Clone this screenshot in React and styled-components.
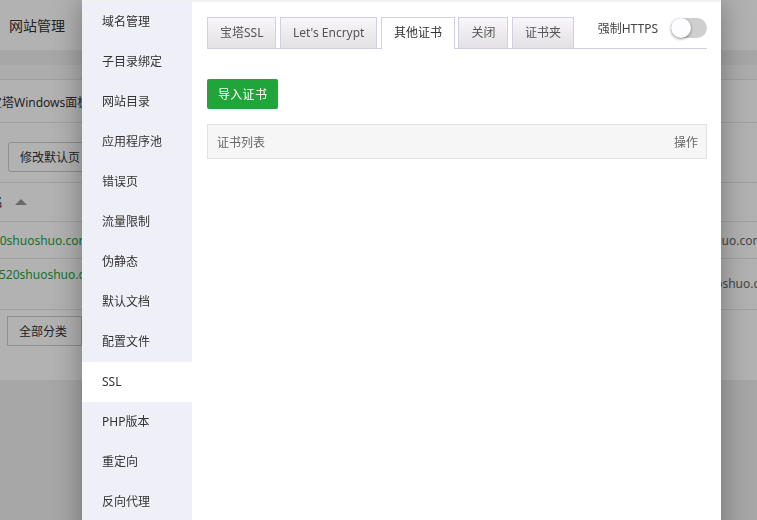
import React from "react";
import styled, { createGlobalStyle } from "styled-components";

const GlobalStyle = createGlobalStyle`
  html, body { margin: 0; padding: 0; }
  body {
    width: 757px;
    height: 520px;
    overflow: hidden;
    background: #f0f0f0;
    font-family: "Noto Sans", "Noto Sans CJK SC", sans-serif;
    font-size: 12px;
    color: #333;
  }
  * { box-sizing: border-box; }
`;

/* ---------- background page ---------- */
const Page = styled.div`
  width: 757px;
  height: 520px;
  background: #f0f0f0;
`;

const Header = styled.div`
  height: 50px;
  background: #fff;
  display: flex;
  align-items: center;
  padding-left: 9px;
  font-size: 14px;
  color: #333;
`;

const Band = styled.div`
  height: 15px;
`;

const Card = styled.div`
  background: #fff;
  height: 315px;
  display: flex;
  flex-direction: column;
`;

const CardTop = styled.div`
  height: 15px;
  background: #f8f8f8;
  border-bottom: 1px solid #e6e6e6;
`;

const Row = styled.div`
  display: flex;
  justify-content: space-between;
  align-items: ${(p) => p.$align || "center"};
  height: ${(p) => p.$h}px;
  border-bottom: ${(p) => (p.$noLine ? "none" : "1px solid #e6e6e6")};
`;

const LeftCell = styled.div`
  width: 82px;
  overflow: hidden;
  white-space: nowrap;
  display: flex;
  align-items: center;
  padding-top: ${(p) => p.$pt || 0}px;
`;

const RightCell = styled.div`
  width: 36px;
  overflow: hidden;
  white-space: nowrap;
  padding-top: ${(p) => p.$pt || 0}px;
`;

const ClipText = styled.span`
  display: inline-block;
  margin-left: ${(p) => p.$shift}px;
  color: ${(p) => p.$color || "#333"};
  font-size: ${(p) => p.$size || 12}px;
`;

const SortArrow = styled.span`
  display: inline-block;
  width: 0;
  height: 0;
  margin-left: 12px;
  border-left: 6px solid transparent;
  border-right: 6px solid transparent;
  border-bottom: 6px solid #999;
`;

const GhostButton = styled.div`
  margin-left: 8px;
  height: 30px;
  padding: 0 11px;
  border: 1px solid #ccc;
  border-radius: 3px;
  display: flex;
  align-items: center;
  color: #333;
  white-space: nowrap;
`;

const SelectBox = styled.div`
  margin-left: 7px;
  height: 30px;
  width: 120px;
  padding-left: 11px;
  border: 1px solid #ccc;
  display: flex;
  align-items: center;
  color: #333;
  white-space: nowrap;
`;

/* ---------- overlay & modal ---------- */
const Shade = styled.div`
  position: fixed;
  inset: 0;
  background: rgba(0, 0, 0, 0.3);
`;

const Modal = styled.div`
  position: absolute;
  left: 82px;
  top: 0;
  width: 639px;
  height: 580px;
  background: #fff;
  box-shadow: 0 0 28px rgba(0, 0, 0, 0.35);
  border-top: 2px solid #f1f1f1;
  display: flex;
`;

const Nav = styled.ul`
  list-style: none;
  margin: 0;
  padding: 0;
  width: 110px;
  background: #eeeff7;
`;

const NavItem = styled.li`
  height: 40px;
  line-height: 40px;
  padding-left: 20px;
  font-size: 12px;
  color: #333;
  background: ${(p) => (p.$active ? "#fff" : "transparent")};
`;

const Content = styled.div`
  flex: 1;
  padding: 15px 14px 0 15px;
`;

const TabBar = styled.div`
  display: flex;
  align-items: flex-start;
  height: 32px;
  border-bottom: 1px solid #d1cfe3;
`;

const Tab = styled.div`
  height: ${(p) => (p.$active ? 32 : 31)}px;
  line-height: 30px;
  padding: 0 12px;
  margin-right: 3.5px;
  border: 1px solid #d1cfe3;
  border-bottom: none;
  font-size: 12px;
  color: ${(p) => (p.$active ? "#333" : "#555")};
  background: ${(p) =>
    p.$active ? "#fff" : "linear-gradient(#f8f6f8, #e3e1e3)"};
  white-space: nowrap;
`;

const ForceHttps = styled.div`
  margin-left: auto;
  margin-top: 1px;
  height: 20px;
  display: flex;
  align-items: center;
  gap: 13px;
  font-size: 12px;
  color: #444;
`;

const Switch = styled.div`
  position: relative;
  width: 36px;
  height: 20px;
  border-radius: 10px;
  background: #cfcfcf;
`;

const Knob = styled.div`
  position: absolute;
  left: 0;
  top: 0;
  width: 20px;
  height: 20px;
  border-radius: 50%;
  background: #fdfcff;
  box-shadow: 0 1px 3px rgba(0, 0, 0, 0.45);
`;

const GreenButton = styled.button`
  margin-top: 30px;
  height: 30px;
  padding: 0 11px;
  border: none;
  border-radius: 2px;
  background: #20a53a;
  color: #fff;
  font-family: inherit;
  font-size: 12px;
  letter-spacing: 0.3px;
`;

const TableHead = styled.div`
  margin-top: 15px;
  height: 35px;
  border: 1px solid #e2e2e2;
  background: #f6f6f6;
  display: flex;
  align-items: center;
  justify-content: space-between;
  padding: 0 8px 0 9px;
  color: #666;
  font-size: 12px;
`;

const navItems = [
  "域名管理",
  "子目录绑定",
  "网站目录",
  "应用程序池",
  "错误页",
  "流量限制",
  "伪静态",
  "默认文档",
  "配置文件",
  "SSL",
  "PHP版本",
  "重定向",
  "反向代理",
  "网站日志",
];

const tabs = ["宝塔SSL", "Let's Encrypt", "其他证书", "关闭", "证书夹"];

export default function App() {
  return (
    <>
      <GlobalStyle />
      <Page>
        <Header>网站管理</Header>
        <Band />
        <Card>
          <CardTop />
          <Row $h={43}>
            <LeftCell $pt={2}>
              <ClipText $shift={-10}>宝塔Windows面板</ClipText>
            </LeftCell>
            <RightCell />
          </Row>
          <Row $h={60} $align="flex-start">
            <LeftCell $pt={19}>
              <GhostButton>修改默认页</GhostButton>
            </LeftCell>
            <RightCell />
          </Row>
          <Row $h={39}>
            <LeftCell>
              <ClipText $shift={-9}>名</ClipText>
              <SortArrow />
            </LeftCell>
            <RightCell />
          </Row>
          <Row $h={37}>
            <LeftCell>
              <ClipText $shift={-14} $color="#20a53a">
                520shuoshuo.com
              </ClipText>
            </LeftCell>
            <RightCell>
              <ClipText $shift={-61} $color="#666">
                520shuoshuo.com
              </ClipText>
            </RightCell>
          </Row>
          <Row $h={51} $align="flex-start">
            <LeftCell $pt={7}>
              <ClipText $shift={-1} $color="#20a53a">
                520shuoshuo.com
              </ClipText>
            </LeftCell>
            <RightCell $pt={16}>
              <ClipText $shift={-47} $color="#666">
                520shuoshuo.com
              </ClipText>
            </RightCell>
          </Row>
          <Row $h={70} $align="flex-start" $noLine>
            <LeftCell $pt={6}>
              <SelectBox>全部分类</SelectBox>
            </LeftCell>
            <RightCell />
          </Row>
        </Card>
      </Page>
      <Shade />
      <Modal>
        <Nav>
          {navItems.map((t) => (
            <NavItem key={t} $active={t === "SSL"}>
              {t}
            </NavItem>
          ))}
        </Nav>
        <Content>
          <TabBar>
            {tabs.map((t) => (
              <Tab key={t} $active={t === "其他证书"}>
                {t}
              </Tab>
            ))}
            <ForceHttps>
              强制HTTPS
              <Switch>
                <Knob />
              </Switch>
            </ForceHttps>
          </TabBar>
          <GreenButton>导入证书</GreenButton>
          <TableHead>
            <span>证书列表</span>
            <span>操作</span>
          </TableHead>
        </Content>
      </Modal>
    </>
  );
}
